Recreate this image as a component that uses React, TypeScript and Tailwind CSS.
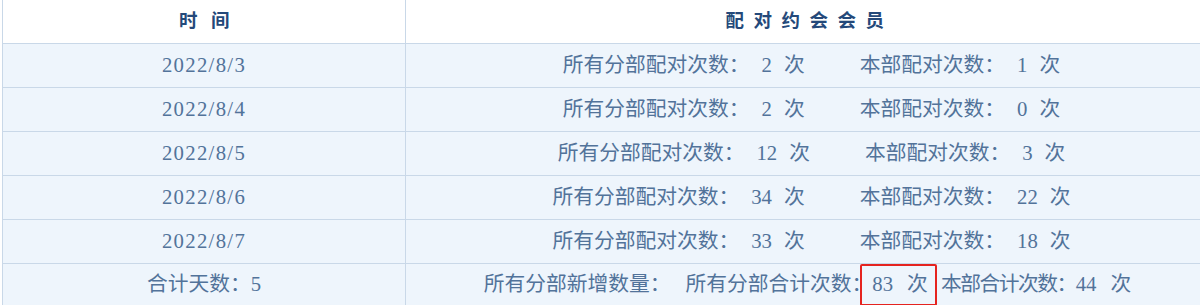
import React from "react";

const rows = [
  { date: "2022/8/3", all: "2", own: "1" },
  { date: "2022/8/4", all: "2", own: "0" },
  { date: "2022/8/5", all: "12", own: "3" },
  { date: "2022/8/6", all: "34", own: "22" },
  { date: "2022/8/7", all: "33", own: "18" },
];

function Row({ left, children, last }: { left: React.ReactNode; children: React.ReactNode; last?: boolean }) {
  return (
    <div className={`flex bg-[#eef5fc] ${last ? "h-[41px]" : "h-[44px] border-b border-[#c9d8e8]"}`}>
      <div className="flex w-[403px] shrink-0 items-center justify-center border-r border-[#c9d8e8]">{left}</div>
      <div className="flex flex-1 items-center justify-center whitespace-nowrap">{children}</div>
    </div>
  );
}

export default function App() {
  return (
    <div className="h-[305px] w-full overflow-hidden bg-white font-['Liberation_Serif','Noto_Sans_CJK_SC',serif] text-[20.75px] leading-none text-[#52739a]">
      <div className="ml-[2px] w-[1215px] border-l border-[#c9d8e8]">
        {/* 表头 */}
        <div className="flex h-[44px] border-b border-[#c9d8e8] bg-white text-[18.5px] font-bold text-[#24497a]">
          <div className="flex w-[403px] shrink-0 items-center justify-center border-r border-[#c9d8e8]">
            <span className="pl-[14px] tracking-[13.5px]">时间</span>
          </div>
          <div className="flex flex-1 items-center justify-center">
            <span className="-ml-[4px] tracking-[9.5px]">配对约会会员</span>
          </div>
        </div>

        {rows.map((r) => (
          <Row key={r.date} left={<span className="tracking-[1.3px]">{r.date}</span>}>
            <span>所有分部配对次数：</span>
            <span className="ml-[12px]">{r.all}</span>
            <span className="ml-[12px]">次</span>
            <span className="ml-[55px]">本部配对次数：</span>
            <span className="ml-[12px]">{r.own}</span>
            <span className="ml-[12px]">次</span>
          </Row>
        ))}

        <Row last left={<span>合计天数：5</span>}>
          <span className="-ml-[8px]">所有分部新增数量：</span>
          <span className="ml-[15px]">所有分部合计次数：</span>
          <span className="relative">
            <span>83</span>
            <span className="ml-[14px]">次</span>
            {/* 红框标注 */}
            <span className="absolute -left-[12px] -right-[9px] top-1/2 h-[42px] -translate-y-1/2 rounded-[2px] border-2 border-[#e5231f]" />
          </span>
          <span className="ml-[13px] tracking-[-1.5px]">本部合计次数：</span>
          <span>44</span>
          <span className="ml-[14px]">次</span>
        </Row>
      </div>
    </div>
  );
}
